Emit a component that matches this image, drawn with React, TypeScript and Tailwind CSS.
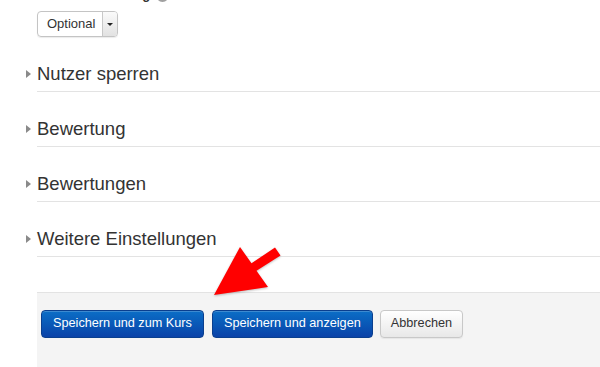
export default function App() {
  const sections = ['Nutzer sperren', 'Bewertung', 'Bewertungen', 'Weitere Einstellungen'];

  return (
    <div
      className="relative w-[600px] h-[367px] overflow-hidden bg-white text-[#333]"
      style={{ fontFamily: '"Liberation Sans", Arial, sans-serif' }}
    >
      {/* cut-off label from the row above */}
      <div className="h-[11px] overflow-hidden">
        <div className="-mt-[13px] flex items-center gap-[6px] pl-[60px] text-[13px] font-bold leading-[16px]">
          <span>Einschreibung</span>
          <span className="w-[13px] h-[13px] rounded-full bg-[#a0a0a0]" />
        </div>
      </div>

      {/* select */}
      <div className="ml-[37px] flex h-[26px] w-[81px] rounded-[4px] border border-[#c4c4c4] shadow-[0_1px_1px_rgba(0,0,0,0.08)]">
        <div className="flex flex-1 items-center pl-[9px] text-[13px] text-[#333]">Optional</div>
        <div className="flex w-[15px] items-center justify-center rounded-r-[3px] border-l border-[#c8c8c8] bg-gradient-to-b from-[#fafafa] to-[#e2e2e2]">
          <span className="block h-0 w-0 border-x-[3px] border-t-[3px] border-x-transparent border-t-[#222]" />
        </div>
      </div>

      {/* collapsed sections */}
      <div className="ml-[37px]">
        {sections.map((title) => (
          <div key={title} className="border-b border-[#e3e3e3] pt-[26px] pb-[6px]">
            <div className="flex items-center -ml-[11px]">
              <span className="mr-[6px] block h-0 w-0 border-y-[4px] border-l-[5px] border-y-transparent border-l-[#8a8a8a]" />
              <h3 className="text-[18.5px] leading-[22px] font-normal text-[#333]">{title}</h3>
            </div>
          </div>
        ))}
      </div>

      {/* footer buttons */}
      <div className="ml-[37px] mt-[35px] h-[80px] border-t border-[#e3e3e3] bg-[#f4f4f4] pl-[4px] pt-[17px]">
        <div className="flex gap-[8px]">
          <button className="h-[28px] rounded-[4px] border border-[#0a3f8e] bg-gradient-to-b from-[#0c6ec6] to-[#0b42a8] px-[11px] text-[12.7px] text-white shadow-[inset_0_1px_0_rgba(255,255,255,0.2)]">
            Speichern und zum Kurs
          </button>
          <button className="h-[28px] rounded-[4px] border border-[#0a3f8e] bg-gradient-to-b from-[#0c6ec6] to-[#0b42a8] px-[11px] text-[12.7px] text-white shadow-[inset_0_1px_0_rgba(255,255,255,0.2)]">
            Speichern und anzeigen
          </button>
          <button className="-ml-[1px] h-[28px] rounded-[4px] border border-[#c8c8c8] bg-gradient-to-b from-white to-[#e8e8e8] px-[10px] text-[12.7px] text-[#333] shadow-[0_1px_1px_rgba(0,0,0,0.06)]">
            Abbrechen
          </button>
        </div>
      </div>

      {/* red annotation arrow */}
      <svg className="pointer-events-none absolute inset-0" width="600" height="367" viewBox="0 0 600 367">
        <polygon
          points="214,295 240,247 251.5,263.3 275,247.5 280.5,255.5 256.5,270.7 268,287"
          fill="#ff0000"
          style={{ filter: 'drop-shadow(0 1px 1px rgba(0,0,0,0.25))' }}
        />
      </svg>
    </div>
  );
}
